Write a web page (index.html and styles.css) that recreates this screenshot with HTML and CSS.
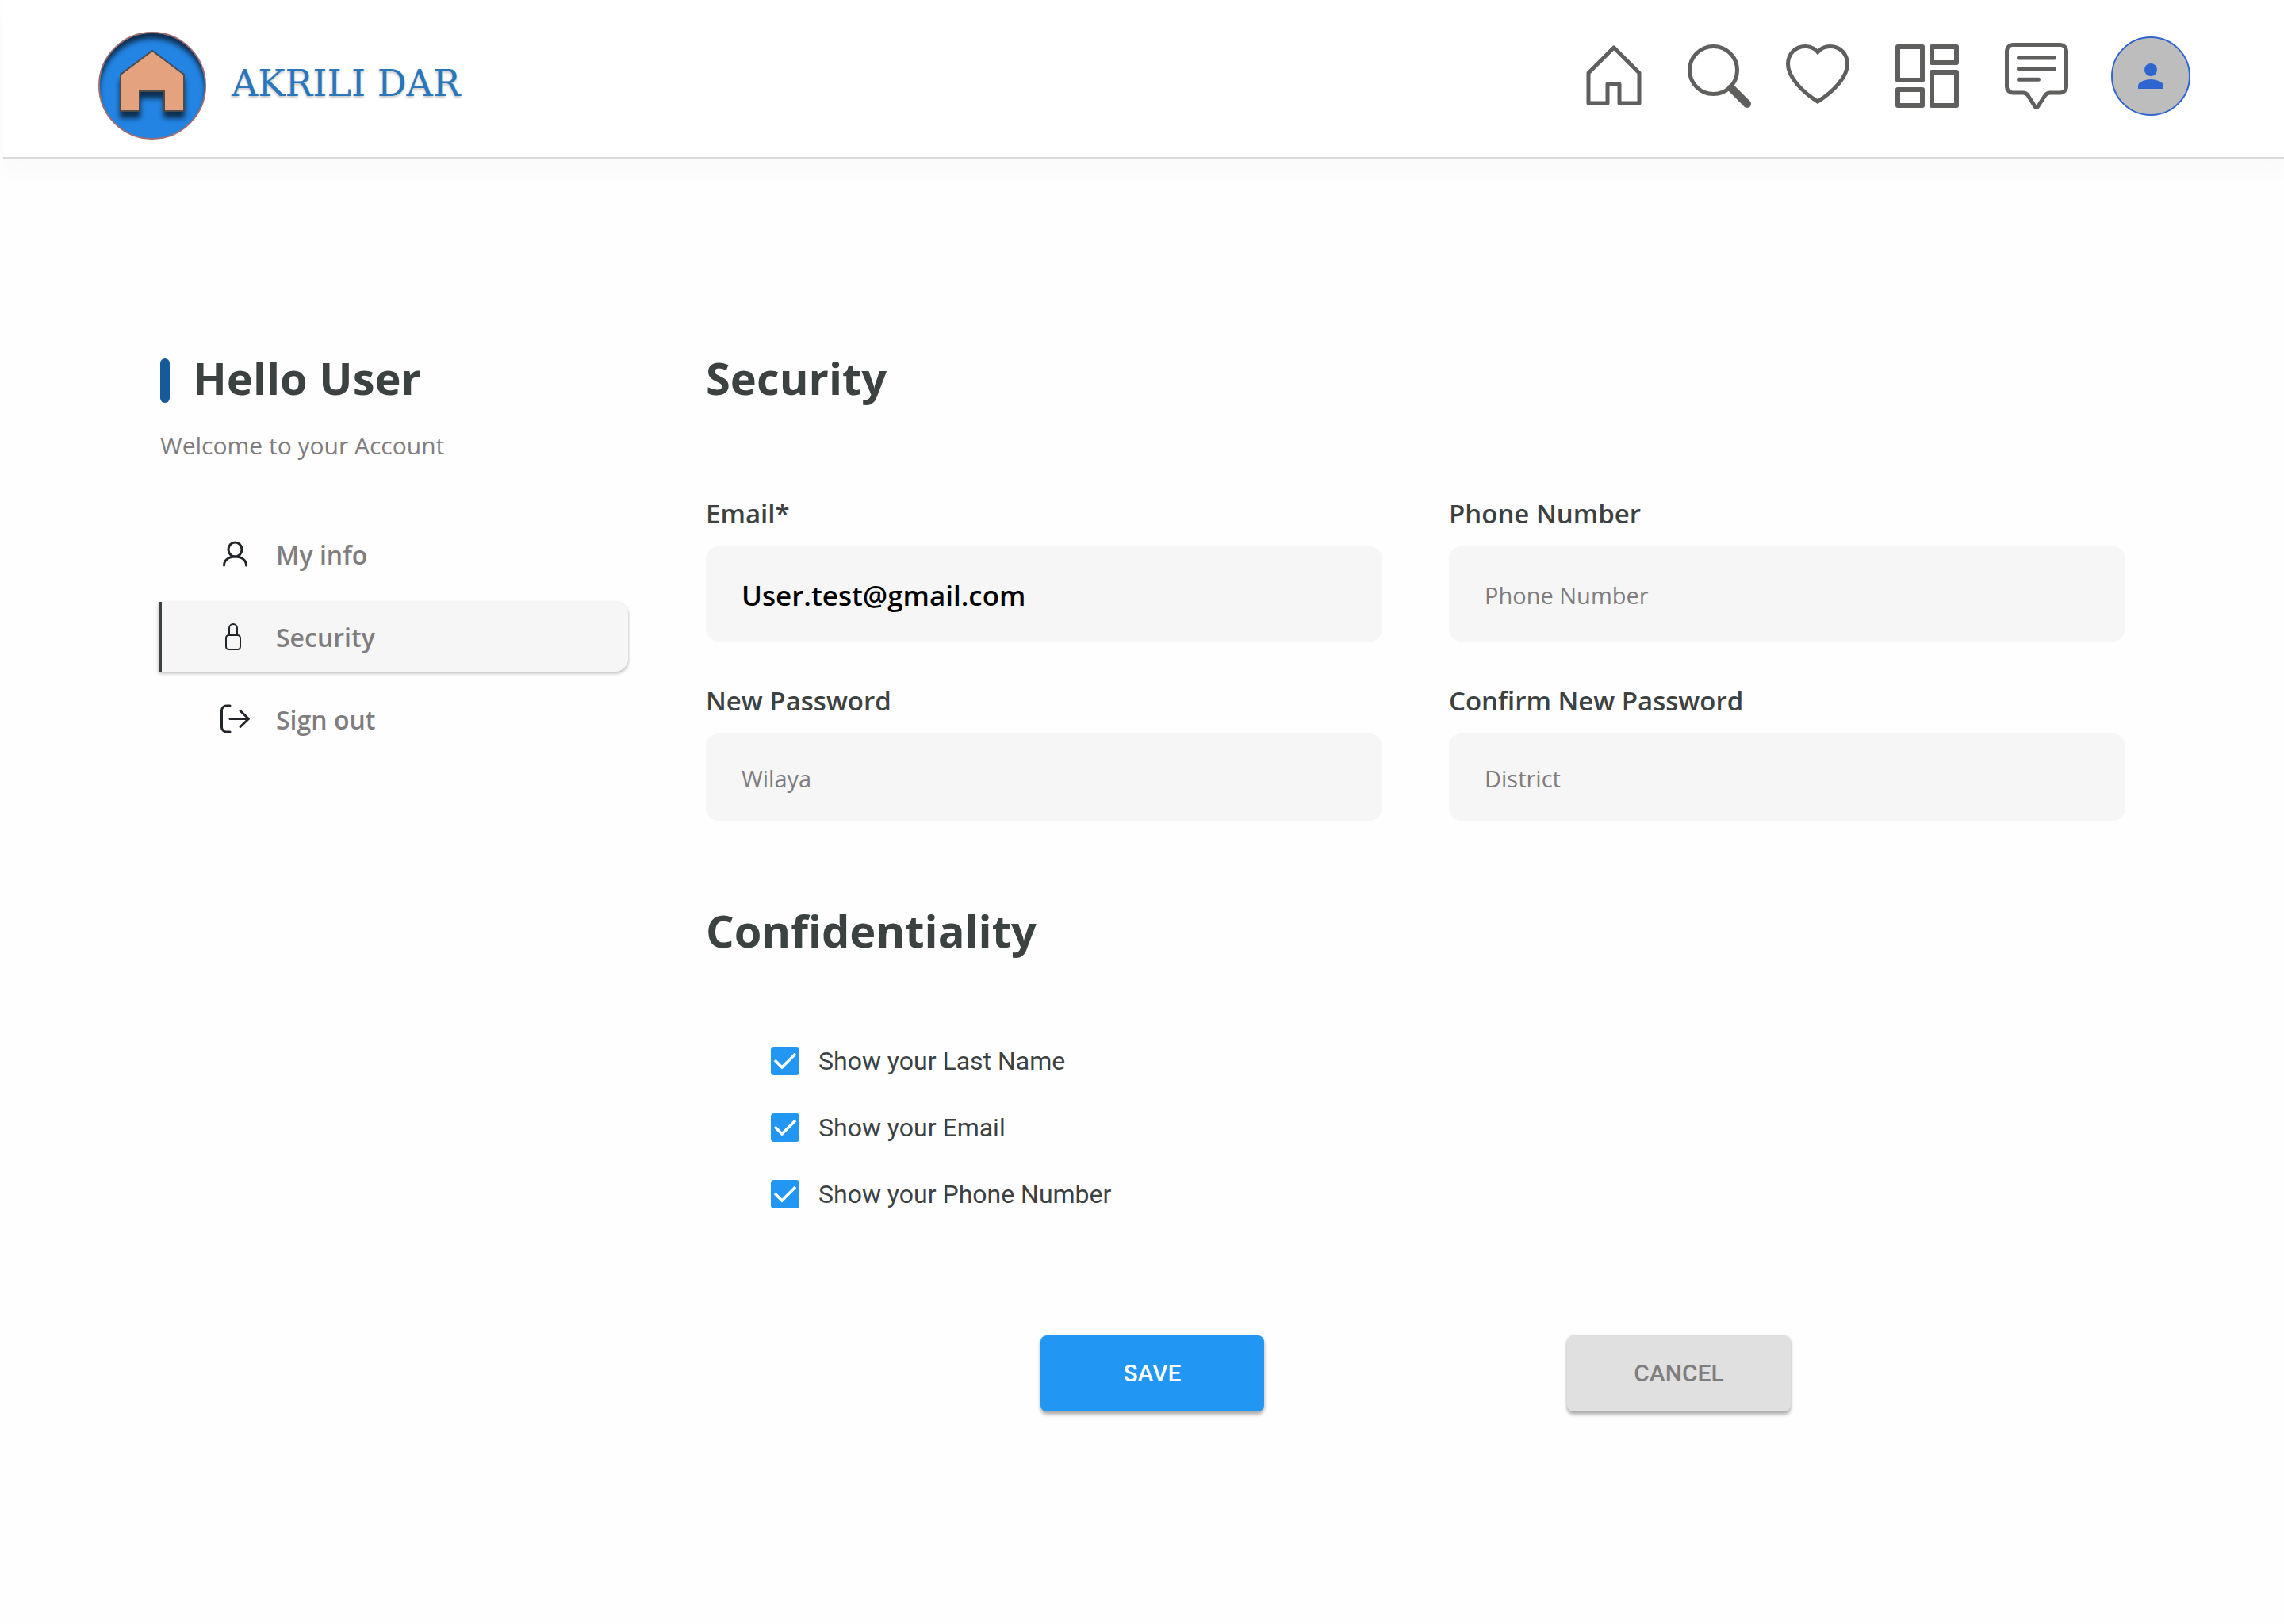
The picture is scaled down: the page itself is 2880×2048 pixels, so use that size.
FILE: index.html
```html
<!DOCTYPE html>
<html lang="en">
<head>
  <meta charset="utf-8">
  <meta name="viewport" content="width=device-width, initial-scale=1">
  <title>Akrili Dar</title>
  <link rel="stylesheet" href="styles.css">
</head>
<body>
  <header class="header">
    <a class="brand" href="#">
      <svg class="brand-logo" width="136" height="136" viewBox="0 0 136 136" aria-hidden="true">
        <defs>
          <clipPath id="disc"><circle cx="68" cy="68" r="67"/></clipPath>
          <filter id="soft" x="-20%" y="-20%" width="140%" height="140%"><feGaussianBlur stdDeviation="3"/></filter>
          <filter id="drop" x="-20%" y="-20%" width="140%" height="150%"><feDropShadow dx="0" dy="8" stdDeviation="3" flood-color="#000" flood-opacity="0.65"/></filter>
        </defs>
        <circle cx="68" cy="68" r="67" fill="#2384e3"/>
        <g clip-path="url(#disc)">
          <path d="M-20-20H156V156H-20ZM68 9a67 67 0 1 0 0 134a67 67 0 1 0 0-134Z" fill="#000" fill-opacity="0.65" fill-rule="evenodd" filter="url(#soft)"/>
        </g>
        <circle cx="68" cy="68" r="67" fill="none" stroke="#9b6d70" stroke-width="2"/>
        <path d="M68 24L108 54V100H83V75H52V100H28V54Z" fill="#e5a27f" stroke="#4b4b4a" stroke-width="2" filter="url(#drop)"/>
      </svg>
      <span class="brand-name">AKRILI DAR</span>
    </a>
    <nav class="actions" aria-label="Main">
      <a href="#" aria-label="Home">
        <svg class="line-icon" width="88" height="80" viewBox="0 0 88 80"><path d="M39 4L71 36V74H46V50H31V74H7V36Z"/></svg>
      </a>
      <a href="#" aria-label="Search">
        <svg class="line-icon" width="80" height="80" viewBox="0 0 80 80"><circle cx="32.5" cy="32.5" r="30"/><path d="M55 55L75 75" stroke-width="10"/></svg>
      </a>
      <a href="#" aria-label="Favourites">
        <svg class="line-icon heart" width="94" height="80" viewBox="0 0 94 80"><path d="M40 9.5C36 5 30 2.5 24.500 2.500C11.500 2.500 2.500 12 2.500 25C2.500 40 19 59 40 72C61 59 77.500 40 77.500 25C77.500 12 68.500 2.500 55.500 2.500C50 2.500 44 5 40 9.500Z"/></svg>
      </a>
      <a href="#" aria-label="Dashboard">
        <svg class="line-icon grid-icon" width="94" height="80" viewBox="0 0 94 80"><rect x="3" y="3" width="31" height="42"/><rect x="46" y="3" width="31" height="20"/><rect x="3" y="57" width="31" height="20"/><rect x="46" y="35" width="31" height="42"/></svg>
      </a>
      <a href="#" aria-label="Messages">
        <svg class="line-icon" width="90" height="84" viewBox="0 0 90 84"><path d="M10 2.5H70A7.500 7.500 0 0 1 77.500 10V55.500A7.500 7.500 0 0 1 70 63H57C54 63 52.500 64 51 66L41.500 80.500Q39.700 82.500 38 80.500L29 66C27.500 64 26 63 23 63H10A7.500 7.500 0 0 1 2.500 55.500V10A7.500 7.500 0 0 1 10 2.500Z"/><path d="M17.500 19H62.500M17.500 32.700H62.500M17.500 46.300H42.500"/></svg>
      </a>
      <a href="#" aria-label="Account">
        <svg width="100" height="100" viewBox="0 0 100 100"><circle cx="50" cy="50" r="49" fill="#bdbdbd" stroke="#2f65cf" stroke-width="2"/><circle cx="50" cy="42" r="8" fill="#2f65cf"/><path d="M34 66V62C34 56.700 44.700 54 50 54S66 56.700 66 62V66Z" fill="#2f65cf"/></svg>
      </a>
    </nav>
  </header>

  <div class="layout">
    <aside class="sidebar">
      <h1 class="title greeting">Hello User</h1>
      <p class="welcome">Welcome to your Account</p>
      <nav class="menu" aria-label="Account">
        <a class="menu-item" href="#">
          <svg class="menu-icon" width="40" height="40" viewBox="0 0 40 40"><ellipse cx="20.500" cy="14" rx="8.500" ry="9"/><path d="M6.500 34C6.500 27.500 12 23 20.500 23S34.500 27.500 34.500 34"/></svg>
          My info
        </a>
        <a class="menu-item active" href="#" aria-current="page">
          <svg class="menu-icon lock" width="40" height="40" viewBox="0 0 40 40"><rect x="9" y="18" width="18" height="18" rx="3.500"/><path d="M13 18V9A5 5 0 0 1 23 9V18"/></svg>
          Security
        </a>
        <a class="menu-item" href="#">
          <svg class="menu-icon" width="40" height="40" viewBox="0 0 40 40"><path d="M14 3H9.500A6 6 0 0 0 3.500 9V30A6 6 0 0 0 9.500 36H14M14 19.500H37.500M27 9.500L37.500 19.500L27 29.500"/></svg>
          Sign out
        </a>
      </nav>
    </aside>

    <main>
      <form class="form">
        <h2 class="title">Security</h2>
        <div class="fields">
          <div class="field">
            <label for="email">Email*</label>
            <input class="input tall" id="email" type="email" value="User.test@gmail.com">
          </div>
          <div class="field">
            <label for="phone">Phone Number</label>
            <input class="input tall" id="phone" type="tel" placeholder="Phone Number">
          </div>
          <div class="field">
            <label for="password">New Password</label>
            <input class="input" id="password" type="password" placeholder="Wilaya">
          </div>
          <div class="field">
            <label for="confirm">Confirm New Password</label>
            <input class="input" id="confirm" type="password" placeholder="District">
          </div>
        </div>

        <h2 class="title">Confidentiality</h2>
        <div class="options">
          <label class="option"><input class="checkbox" type="checkbox" checked>Show your Last Name</label>
          <label class="option"><input class="checkbox" type="checkbox" checked>Show your Email</label>
          <label class="option"><input class="checkbox" type="checkbox" checked>Show your Phone Number</label>
        </div>

        <div class="buttons">
          <button class="button primary" type="submit">SAVE</button>
          <button class="button" type="reset">CANCEL</button>
        </div>
      </form>
    </main>
  </div>
</body>
</html>
```
FILE: styles.css
```css
* {
  box-sizing: border-box;
}

body {
  margin: 0;
  background: #fefefe;
  color: #3c4242;
  font-family: "Open Sans", sans-serif;
}

a {
  color: inherit;
  text-decoration: none;
}

svg {
  display: block;
}

/* Header */
.header {
  display: flex;
  justify-content: space-between;
  align-items: flex-start;
  margin-left: 4px;
  padding: 40px 118px 22px 120px;
  border-bottom: 2px solid #d9d9d9;
  background: #fff;
  box-shadow: 0 20px 24px rgba(0, 0, 0, 0.02);
}

.brand {
  display: flex;
  align-items: center;
  gap: 32px;
}

.brand-name {
  padding-bottom: 6px;
  color: #2a76bb;
  font-family: "DejaVu Serif", serif;
  font-size: 46px;
  text-shadow: 0 2px 3px rgba(0, 0, 0, 0.25);
}

.actions {
  display: flex;
  align-items: center;
  gap: 44px;
  padding-top: 6px;
}

.line-icon {
  fill: none;
  stroke: #5f5f5d;
  stroke-width: 5;
  stroke-linecap: round;
  stroke-linejoin: round;
}

.heart {
  stroke-linejoin: miter;
}

.grid-icon {
  stroke-width: 6;
}

/* Page columns */
.layout {
  display: grid;
  grid-template-columns: 592px 1fr;
  gap: 98px;
  padding: 238px 200px 160px;
}

.title {
  margin: 0;
  font-size: 56px;
  font-weight: 700;
  line-height: 76px;
}

/* Sidebar */
.greeting {
  display: flex;
  align-items: center;
  gap: 29px;
  padding-left: 2px;
}

.greeting::before {
  content: "";
  width: 12px;
  height: 56px;
  margin-top: 8px;
  border-radius: 6px;
  background: #165a99;
}

.welcome {
  margin: 28px 0 73px;
  padding-left: 2px;
  color: #807d7e;
  font-size: 30px;
  line-height: 40px;
}

.menu {
  display: flex;
  flex-direction: column;
  gap: 16px;
}

.menu-item {
  display: flex;
  align-items: center;
  gap: 32px;
  height: 88px;
  padding-left: 72px;
  border-left: 4px solid transparent;
  color: #807d7e;
  font-size: 32px;
  font-weight: 600;
}

.menu-item.active {
  border-left-color: #3c4242;
  border-radius: 0 16px 16px 0;
  background: #f6f6f6;
  box-shadow: 0 2px 4px rgba(0, 0, 0, 0.3);
}

.menu-icon {
  fill: none;
  stroke: #212529;
  stroke-width: 3;
  stroke-linecap: round;
  stroke-linejoin: round;
}

.lock {
  stroke-width: 2;
}

/* Form */
.fields {
  display: grid;
  grid-template-columns: 1fr 1fr;
  gap: 53px 84px;
  margin: 112px 0 100px;
}

.field {
  display: flex;
  flex-direction: column;
  gap: 19px;
  font-size: 33px;
  font-weight: 600;
  line-height: 44px;
}

.input {
  width: 100%;
  height: 110px;
  padding: 2px 45px 0;
  border: 0;
  border-radius: 16px;
  background: #f6f6f6;
  color: #000;
  font: 600 35px "Open Sans", sans-serif;
}

.input.tall {
  height: 120px;
}

.input::placeholder {
  color: #807d7e;
  font-size: 29px;
  font-weight: 400;
  opacity: 1;
}

.input:placeholder-shown {
  font-size: 29px;
}

.options {
  display: flex;
  flex-direction: column;
  align-items: flex-start;
  gap: 48px;
  margin-top: 109px;
  padding-left: 82px;
}

.option {
  display: flex;
  align-items: center;
  gap: 24px;
  font-family: Roboto, sans-serif;
  font-size: 32px;
  line-height: 36px;
}

.checkbox {
  appearance: none;
  width: 36px;
  height: 36px;
  margin: 0;
  border: 2px solid #2196f3;
  border-radius: 4px;
}

.checkbox:checked {
  background: #2196f3 url("data:image/svg+xml,%3Csvg xmlns='http://www.w3.org/2000/svg' viewBox='0 0 36 36'%3E%3Cpath d='M5 17L14 26L31 9' fill='none' stroke='white' stroke-width='3.6'/%3E%3C/svg%3E") center / 36px 36px no-repeat;
}

.buttons {
  display: flex;
  justify-content: center;
  gap: 382px;
  margin-top: 160px;
}

.button {
  width: 282px;
  height: 96px;
  padding: 0 0 2px;
  border: 0;
  border-radius: 8px;
  background: #e0e0e0;
  box-shadow: 0 4px 4px rgba(0, 0, 0, 0.3), 0 0 4px rgba(0, 0, 0, 0.08);
  color: #807d7e;
  font: 500 30px Roboto, sans-serif;
}

.button.primary {
  background: #2196f3;
  color: #fff;
}
```
